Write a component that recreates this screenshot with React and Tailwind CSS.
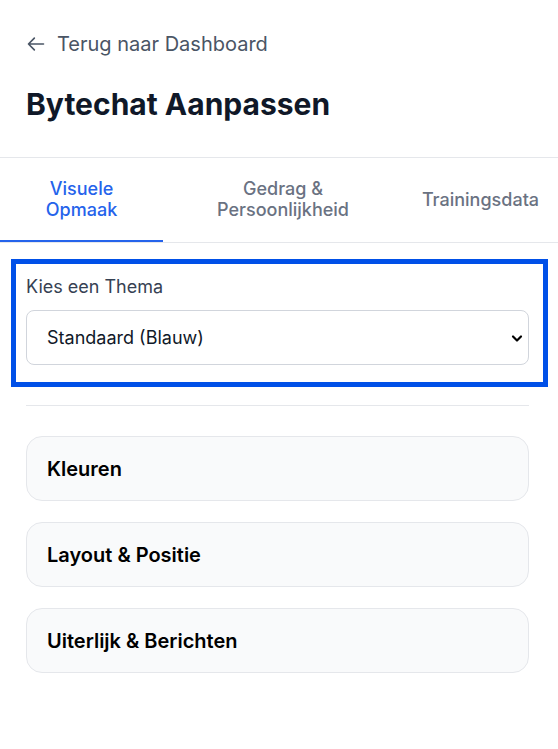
const font = { fontFamily: "Inter, 'Noto Sans', sans-serif" };

function Tab({ label, active, className }) {
  return (
    <button
      className={`flex items-center justify-center border-b-2 pt-5 pb-5 text-center text-lg leading-[21px] font-medium ${
        active ? "border-[#2563eb] text-[#2563eb]" : "border-transparent text-gray-500"
      } ${className}`}
    >
      {label}
    </button>
  );
}

function Section({ title }) {
  return (
    <div className="flex h-[65px] items-center rounded-2xl border border-gray-200 bg-gray-50 px-5">
      <h3 className="text-xl font-semibold text-black">{title}</h3>
    </div>
  );
}

export default function App() {
  return (
    <div className="min-h-[749px] w-[558px] bg-white" style={font}>
      <div className="pl-[26px] pr-[29px] pt-[30px]">
        <a className="flex items-center gap-[11px] text-xl leading-7 text-gray-600">
          <svg
            className="h-5 w-5"
            viewBox="0 0 24 24"
            fill="none"
            stroke="currentColor"
            strokeWidth="2"
            strokeLinecap="round"
            strokeLinejoin="round"
          >
            <path d="M10 19l-7-7m0 0l7-7m-7 7h18" />
          </svg>
          <span>Terug naar Dashboard</span>
        </a>
        <h1 className="mt-[28px] text-3xl font-bold text-gray-900">Bytechat Aanpassen</h1>
      </div>

      <div className="mt-[35px] flex border-y border-gray-200">
        <Tab label={<>Visuele<br />Opmaak</>} active className="w-[163px]" />
        <Tab label={<>Gedrag &amp;<br />Persoonlijkheid</>} className="w-[240px]" />
        <Tab label="Trainingsdata" className="flex-1" />
      </div>

      <div className="pl-[26px] pr-[29px]">
        <div className="-ml-[15px] -mr-[19px] mt-4 border-[5px] border-[#0050e8] pt-[10px] pb-[17px] pl-[10px] pr-[14px]">
          <label className="block text-lg leading-[26px] text-gray-700">Kies een Thema</label>
          <div className="relative mt-[10px]">
            <select className="h-[55px] w-full appearance-none rounded-lg border border-gray-300 bg-white pl-5 text-lg text-gray-900">
              <option>Standaard (Blauw)</option>
            </select>
            <svg
              className="pointer-events-none absolute right-[6px] top-1/2 h-3 w-3 -translate-y-1/2"
              viewBox="0 0 12 12"
              fill="none"
              stroke="black"
              strokeWidth="2.2"
              strokeLinecap="round"
              strokeLinejoin="round"
            >
              <path d="M2 4.5l4 4 4-4" />
            </svg>
          </div>
        </div>

        <div className="mt-[18px] border-t border-gray-200" />

        <div className="mt-[30px] flex flex-col gap-[21px]">
          <Section title="Kleuren" />
          <Section title="Layout & Positie" />
          <Section title="Uiterlijk & Berichten" />
        </div>
      </div>
    </div>
  );
}
